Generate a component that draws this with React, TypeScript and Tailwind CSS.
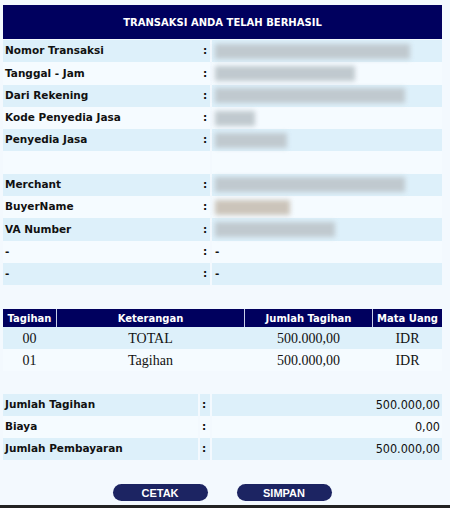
import React from "react";

const info = [
  { label: "Nomor Transaksi", blur: 195 },
  { label: "Tanggal - Jam", blur: 140 },
  { label: "Dari Rekening", blur: 190 },
  { label: "Kode Penyedia Jasa", blur: 40 },
  { label: "Penyedia Jasa", blur: 72 },
  { label: "", blur: 0, empty: true },
  { label: "Merchant", blur: 190 },
  { label: "BuyerName", blur: 75, warm: true },
  { label: "VA Number", blur: 120 },
  { label: "-", blur: 0, dash: true },
  { label: "-", blur: 0, dash: true },
];

const bills = [
  { code: "00", desc: "TOTAL", amount: "500.000,00", cur: "IDR" },
  { code: "01", desc: "Tagihan", amount: "500.000,00", cur: "IDR" },
];

const summary = [
  { label: "Jumlah Tagihan", value: "500.000,00" },
  { label: "Biaya", value: "0,00" },
  { label: "Jumlah Pembayaran", value: "500.000,00" },
];

const sans = "font-['DejaVu_Sans',Verdana,sans-serif]";

function Blur({ width, warm }: { width: number; warm?: boolean }) {
  return (
    <div
      className={`h-[15px] blur-[2.5px] ${warm ? "bg-[#cbc4ba]" : "bg-[#c0c9cf]"}`}
      style={{ width }}
    />
  );
}

export default function App() {
  return (
    <div className={`w-[450px] h-[508px] bg-[#f3f9fe] ${sans} relative overflow-hidden`}>
      <div className="pt-[5px] pl-[3px] w-[442px]">
        <div className="h-[34px] bg-[#00005e] flex items-center justify-center text-white font-bold text-[10px]">
          TRANSAKSI ANDA TELAH BERHASIL
        </div>

        <div className="mt-[1px]">
          {info.map((r, i) => (
            <div
              key={i}
              className={`h-[22.3px] flex text-[10.5px] font-bold text-[#111] ${i % 2 === 0 ? "bg-[#ddf0fa]" : "bg-[#f5fbff]"}`}
            >
              <div className="w-[200px] pl-[2px] flex items-center">{r.label}</div>
              <div className="w-[7px] flex items-center">{r.empty ? "" : ":"}</div>
              <div className="flex-1 pl-[3px] flex items-center border-l-2 border-[#f3f9fe]">
                {r.dash ? <span>-</span> : r.blur ? <Blur width={r.blur} warm={r.warm} /> : null}
              </div>
            </div>
          ))}
        </div>

        <div className="mt-[24px]">
          <div className="flex h-[18px] gap-[1px] bg-[#c8d0e8] text-white text-[10px] font-bold">
            <div className="w-[53px] bg-[#00005e] flex items-center justify-center">Tagihan</div>
            <div className="w-[187px] bg-[#00005e] flex items-center justify-center">Keterangan</div>
            <div className="w-[127px] bg-[#00005e] flex items-center justify-center">Jumlah Tagihan</div>
            <div className="flex-1 bg-[#00005e] flex items-center justify-center">Mata Uang</div>
          </div>
          {bills.map((b, i) => (
            <div
              key={b.code}
              className={`flex h-[22px] gap-[1px] font-['Liberation_Serif','Times_New_Roman',serif] text-[14px] text-[#111] ${i % 2 === 0 ? "bg-[#ddf0fa]" : "bg-[#f5fbff]"}`}
            >
              <div className="w-[53px] flex items-center justify-center">{b.code}</div>
              <div className="w-[187px] flex items-center justify-center">{b.desc}</div>
              <div className="w-[127px] flex items-center justify-center">{b.amount}</div>
              <div className="flex-1 flex items-center justify-center">{b.cur}</div>
            </div>
          ))}
        </div>

        <div className="mt-[23px]">
          {summary.map((s, i) => (
            <div
              key={s.label}
              className={`h-[22px] flex text-[10.5px] text-[#111] ${i % 2 === 0 ? "bg-[#ddf0fa]" : "bg-[#f5fbff]"}`}
            >
              <div className="w-[195px] pl-[2px] flex items-center font-bold">{s.label}</div>
              <div className="w-[12px] pl-[2px] flex items-center font-bold border-l-2 border-[#f3f9fe]">:</div>
              <div className="flex-1 pr-[2px] flex items-center justify-end text-[12.5px] font-['DejaVu_Sans_Condensed','DejaVu_Sans',sans-serif] border-l-2 border-[#f3f9fe]">
                {s.value}
              </div>
            </div>
          ))}
        </div>

        <div className="mt-[24px] flex justify-center gap-[29px] pr-[1px]">
          {["CETAK", "SIMPAN"].map((t) => (
            <button
              key={t}
              className="w-[95px] h-[17px] rounded-full bg-[#1c2462] text-white text-[11px] font-bold font-['Liberation_Sans',Arial,sans-serif] flex items-center justify-center"
            >
              {t}
            </button>
          ))}
        </div>
      </div>
      <div className="absolute bottom-0 left-0 w-full h-[3px] bg-[#222]" />
    </div>
  );
}
